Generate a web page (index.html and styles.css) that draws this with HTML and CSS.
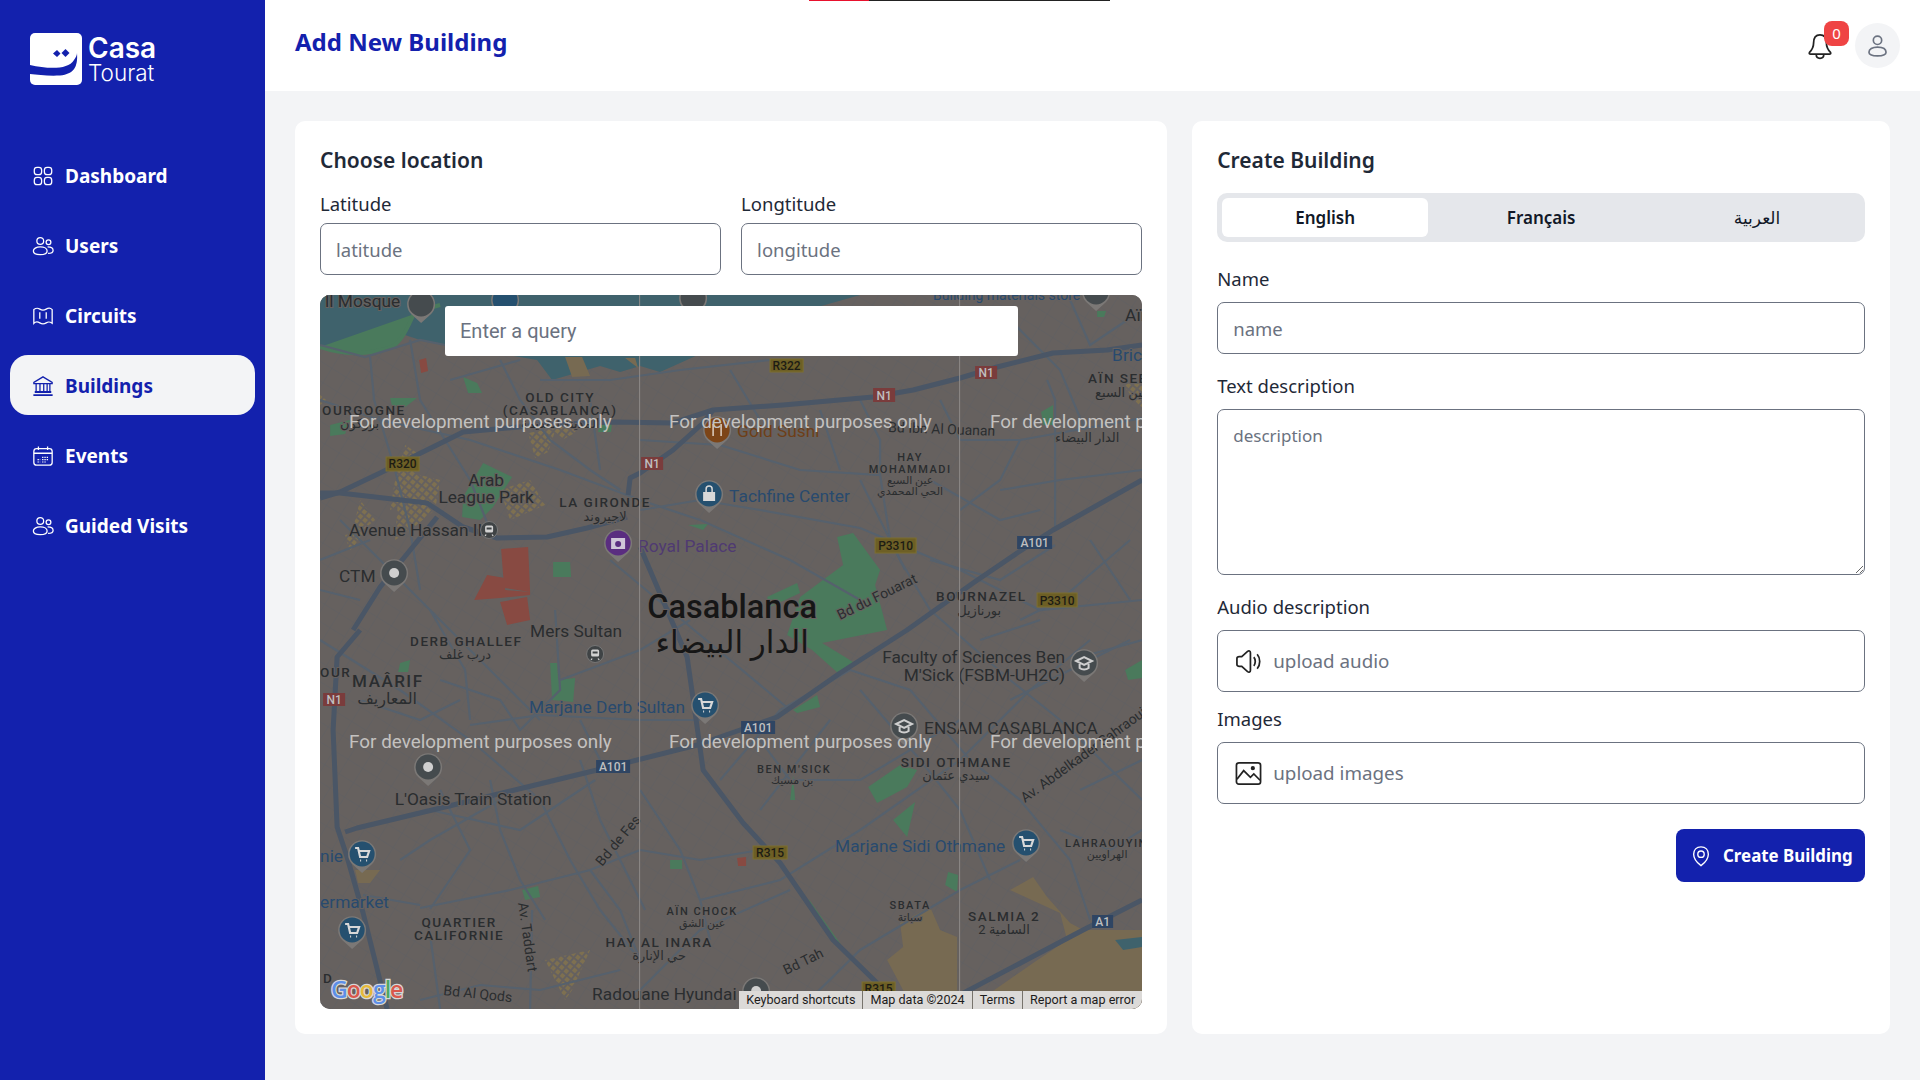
FILE: index.html
```html
<!DOCTYPE html>
<html lang="en">
<head>
    <meta charset="UTF-8">
    <meta name="viewport" content="width=device-width, initial-scale=1.0">
    <title>Add New Building</title>
    <link rel="stylesheet" href="styles.css">
</head>
<body>
    <div class="progress"><span class="progress-red"></span><span class="progress-dark"></span></div>

    <aside class="sidebar">
        <div class="logo">
            <svg class="logo-mark" viewBox="0 0 52 52">
                <rect width="52" height="52" rx="5" fill="#fff"/>
                <path d="M0 32 C18 36 38 37 44 27 C46 24 47 22 47 20 C48 34 44 41 30 42.500 C18 43 8 42 0 41 Z" fill="#1321ad"/>
                <path d="M27 24 L23 20.500 L27 17 L30.500 20.500 Z M35.500 24 L31.500 20 L35.500 16 L39.500 20 Z" fill="#1321ad"/>
            </svg>
            <div class="logo-text"><span class="logo-casa">Casa</span><span class="logo-tourat">Tourat</span></div>
        </div>
        <nav class="nav">
            <a class="nav-item">
                <svg class="icon" viewBox="0 0 24 24"><rect x="2.500" y="2.500" width="8" height="8" rx="3"/><rect x="13.500" y="2.500" width="8" height="8" rx="3"/><rect x="2.500" y="13.500" width="8" height="8" rx="3"/><rect x="13.500" y="13.500" width="8" height="8" rx="3"/></svg>
                Dashboard
            </a>
            <a class="nav-item">
                <svg class="icon" viewBox="0 0 24 24"><circle cx="9" cy="6.500" r="3.700"/><circle cx="18" cy="8" r="2.600"/><path d="M9 13 C4.500 13 1.500 15 1.500 17.500 C1.500 20 4.500 21.500 9 21.500 C13.500 21.500 16.500 20 16.500 17.500 C16.500 15 13.500 13 9 13 Z"/><path d="M17 13 C20.500 13 23 14.500 23 16.800 C23 19 20.500 20 17.500 20"/></svg>
                Users
            </a>
            <a class="nav-item">
                <svg class="icon" viewBox="0 0 24 24"><path d="M2 5 C5 3 6 3 8.500 4.500 C11 6 13 6 15.500 4.500 C18 3 20 3 22 5 V20 C19 18 18 18 15.500 19.500 C13 21 11 21 8.500 19.500 C6 18 4 18 2 20 Z"/><path d="M8.500 8 V15 M15.500 8 V15"/></svg>
                Circuits
            </a>
            <a class="nav-item active">
                <svg class="icon" viewBox="0 0 24 24"><path d="M12 2 L22 8 V9.500 H2 V8 Z"/><path d="M4.500 9.500 V18.500 M8.700 9.500 V18.500 M12.800 9.500 V18.500 M16.500 9.500 V18.500 M19.500 9.500 V18.500"/><path d="M3 18.500 H21 M1.500 22 H22.500" stroke-width="2"/></svg>
                Buildings
            </a>
            <a class="nav-item">
                <svg class="icon" viewBox="0 0 24 24"><rect x="2" y="4" width="20" height="18" rx="3"/><path d="M2 9 H22 M7 1.500 V5.500 M17 1.500 V5.500"/><path d="M6 16 H9 M6 18.500 H9 M11 13.500 H18 M11 16 H18 M11 18.500 H15" stroke-dasharray="1.500 1" stroke-width="1.200"/></svg>
                Events
            </a>
            <a class="nav-item">
                <svg class="icon" viewBox="0 0 24 24"><circle cx="9" cy="6.500" r="3.700"/><circle cx="18" cy="8" r="2.600"/><path d="M9 13 C4.500 13 1.500 15 1.500 17.500 C1.500 20 4.500 21.500 9 21.500 C13.500 21.500 16.500 20 16.500 17.500 C16.500 15 13.500 13 9 13 Z"/><path d="M17 13 C20.500 13 23 14.500 23 16.800 C23 19 20.500 20 17.500 20"/></svg>
                Guided Visits
            </a>
        </nav>
    </aside>

    <div class="page">
        <header class="topbar">
            <h1>Add New Building</h1>
            <div class="topbar-right">
                <div class="bell">
                    <svg class="bell-icon" viewBox="0 0 24 24"><path d="M12 2.500 C7.500 2.500 6.500 6 6.500 9.500 C6.500 13 5.500 15 3 17.500 C2.500 18.500 3 19 4 19 H20 C21 19 21.500 18.500 21 17.500 C18.500 15 17.500 13 17.500 9.500 C17.500 6 16.500 2.500 12 2.500 Z"/><path d="M8.800 19.500 C8.800 21.300 10.200 22.500 12 22.500 C13.800 22.500 15.200 21.300 15.200 19.500"/></svg>
                    <span class="badge">0</span>
                </div>
                <div class="avatar">
                    <svg class="avatar-icon" viewBox="0 0 24 24"><circle cx="12" cy="7" r="4"/><path d="M12 13.500 C7 13.500 3.800 15.500 3.800 18.500 C3.800 21 7 22 12 22 C17 22 20.200 21 20.200 18.500 C20.200 15.500 17 13.500 12 13.500 Z"/></svg>
                </div>
            </div>
        </header>

        <main class="content">
            <section class="card location-card">
                <h2>Choose location</h2>
                <div class="coords">
                    <div>
                        <label class="field-label">Latitude</label>
                        <input class="input" type="text" placeholder="latitude">
                    </div>
                    <div>
                        <label class="field-label">Longtitude</label>
                        <input class="input" type="text" placeholder="longitude">
                    </div>
                </div>

                <div class="map">
                    <svg class="map-svg" viewBox="320 295 822 714">
                        <defs>
                            <pattern id="blocks" width="17" height="17" patternUnits="userSpaceOnUse" patternTransform="rotate(32)">
                                <path d="M0 0 H17 M0 0 V17" class="block-line"/>
                            </pattern>
                            <pattern id="hatch" width="6" height="6" patternUnits="userSpaceOnUse" patternTransform="rotate(40)">
                                <rect width="4" height="4" fill="#7e7050"/>
                            </pattern>
                            <g id="pin">
                                <path d="M0 19 L-10 10 A14 14 0 1 1 10 10 Z" fill="#7b7876"/>
                                <circle r="12.500"/>
                            </g>
                            <g id="cart">
                                <use href="#pin" fill="#25506f"/>
                                <path d="M-7 -6 H-4 L-2 3 H5 L7 -3 H-3.500 M-2 6.500 H-1 M4 6.500 H5" fill="none" stroke="#d8d8d8" stroke-width="2.200"/>
                            </g>
                            <g id="cap">
                                <use href="#pin" fill="#454b4e"/>
                                <path d="M-8 -2 L0 -6 L8 -2 L0 2 Z M-4.500 1 V5 C-2 7 2 7 4.500 5 V1" fill="none" stroke="#cfcfcf" stroke-width="2"/>
                            </g>
                            <g id="station">
                                <circle r="8.500" fill="#3f4345" stroke="#777" stroke-width="1"/>
                                <rect x="-4" y="-4.500" width="8" height="7" rx="1.500" fill="#d2d2d2"/>
                                <path d="M-3 4.500 L-4 6 M3 4.500 L4 6" stroke="#d2d2d2" stroke-width="1.300"/>
                                <rect x="-2.500" y="-2.500" width="5" height="2" fill="#3f4345"/>
                            </g>
                        </defs>

                        <rect x="320" y="295" width="822" height="714" fill="#66615f"/>
                        <rect x="320" y="295" width="822" height="714" fill="url(#blocks)"/>

                        <!-- water and parks -->
                        <path class="water" d="M320 295 H860 L800 312 L720 345 L660 372 L640 366 L620 372 L600 366 L552 380 L537 360 L420 340 L405 335 L392 347 L360 353 L320 346 Z"/>
                        <path class="park" fill="none" stroke="#4a7a5c" stroke-width="4" d="M320 347 C340 354 365 356 392 347 C405 338 410 320 415 312 L440 305"/>
                        <path class="tan" d="M565 357 H582 L590 376 L572 377 Z M625 358 H635 L638 368 Z"/>
                        <path class="park" d="M463 377 L477 383 L482 393 L468 393 Z M483 463 L512 477 L493 507 L480 520 L462 517 L463 497 Z M553 562 H570 L571 577 H553 Z M330 425 L350 420 L345 434 L330 436 Z M390 398 L417 398 L405 407 L392 406 Z M600 420 L612 420 L611 432 L598 432 Z M1041 412 L1053 405 L1053 425 L1043 425 Z M1097 311 L1106 311 L1104 317 L1097 317 Z"/>
                        <path class="park" d="M800 597 L843 565 L837 537 L853 533 L880 570 L875 585 L887 630 L822 643 L853 662 L840 675 L812 650 L787 635 Z"/>
                        <path class="park" d="M767 597 L797 583 L800 593 L770 607 Z M550 663 L557 663 L558 680 L575 678 L573 702 L552 700 Z M522 890 L538 886 L540 897 L525 900 Z M400 663 L410 660 L408 672 L398 672 Z M793 710 L817 695 L820 707 L797 713 Z M868 787 L900 765 L917 770 L907 787 L877 803 Z M893 820 L915 802 L907 837 Z M793 775 L795 800 L790 800 Z M670 860 L682 860 L682 869 L670 869 Z M948 872 L958 875 L957 892 L945 885 Z M1125 670 L1142 660 L1142 678 L1128 680 Z M688 525 L708 524 L703 530 Z"/>
                        <path class="park" stroke="#4a7a5c" stroke-width="2" d="M808 900 L840 945"/>
                        <path class="tan" d="M900 923 L930 907 L940 930 L957 937 V1009 H913 L887 960 L903 947 Z M1010 890 L1033 877 L1047 897 L1070 923 L1083 930 H1142 V1009 H967 L1033 963 L1067 940 L1060 913 Z"/>
                        <path fill="url(#hatch)" d="M528 433 L556 428 L548 452 L535 458 Z M545 425 L580 430 L562 440 Z M405 445 L420 455 L408 500 L390 510 L395 480 Z M400 470 L440 480 L435 510 L410 530 L395 540 Z M500 490 L530 480 L545 505 L510 520 Z M360 500 L375 520 L350 540 Z M345 535 L365 530 L350 552 Z M320 395 L326 400 L320 405 Z M545 960 L590 950 L572 990 L565 1000 Z M1123 385 L1142 380 V410 Z"/>
                        <path class="tan" d="M355 870 L380 870 L370 883 L358 883 Z"/>
                        <path class="water" d="M1115 940 L1142 937 V947 L1123 950 Z"/>
                        <path class="red" d="M501 549 L528 547 L530 592 L505 588 L503 575 Z M487 575 L505 578 L505 590 L530 592 L530 595 L500 598 L474 600 Z M500 602 L527 597 L530 620 L507 625 Z M419 360 L426 358 L428 371 L421 373 Z M737 858 L746 857 L746 866 L738 866 Z"/>

                        <!-- small streets -->
                        <g class="road-minor">
                            <path d="M320 345 L365 357 L420 340 L445 345 M370 357 L374 400 L395 470 L410 530 L420 590 M410 340 L420 400 L445 440 L470 480 L490 530"/>
                            <path d="M320 400 L380 420 L470 440 L560 470 L640 500 L700 520 L790 560 L860 600"/>
                            <path d="M500 360 L520 400 L550 440 L590 470 L620 490 M540 380 L610 380 L680 370 L770 360"/>
                            <path d="M640 440 L720 445 L800 470 L880 475 L880 440 L860 400 M880 475 L890 540 L905 570"/>
                            <path d="M960 440 L1020 440 L1142 418 M1047 380 L1055 400 L1055 530 M960 510 L1000 480 L1020 440"/>
                            <path d="M860 480 L900 560 L930 610 L1010 680 L1060 720 L1142 800 M930 560 L1000 580 L1055 545"/>
                            <path d="M640 510 L700 500 L760 510 L860 528 L960 570 L1040 610 L1142 600"/>
                            <path d="M1000 310 L1060 370 L1085 430 M1070 300 L1090 345 L1142 310"/>
                            <path d="M340 520 L420 600 L500 680 L540 720 M320 590 L360 600 M555 610 L560 690 L520 730 L500 700 L440 680"/>
                            <path d="M320 640 L400 690 L470 740 L540 800 L570 860 L600 910 L640 960 M430 610 L465 670 L470 720"/>
                            <path d="M470 725 L540 715 L640 720 L700 720 M560 680 L640 650 L690 620 M610 560 L670 610 L790 710"/>
                            <path d="M430 810 L520 830 L595 780 M440 790 L470 850 L430 909 M490 780 L500 830 L520 880 L545 920"/>
                            <path d="M420 908 L510 890 L590 870 L640 850 M590 870 L620 910 L640 960 M580 760 L600 820 L630 880 L645 910"/>
                            <path d="M640 790 L680 850 L700 900 L710 940 M640 850 L700 860 L760 850 M830 720 L760 810 M640 990 L700 930 L790 890"/>
                            <path d="M700 900 L780 880 L860 830 L960 760 L1030 690 L1090 640 M780 780 L860 780 L960 720 M860 690 L920 760 L960 810 L990 880"/>
                            <path d="M720 780 L780 710 L850 670 L910 690 L970 760 L1020 800 L1070 860 L1090 920"/>
                            <path d="M800 1009 L860 950 L960 890 L1020 860 M1130 540 L1060 600 L1020 620 M1070 660 L1142 640"/>
                            <path d="M1010 700 L1130 640 M1080 790 L1142 760 M1060 830 L1110 850 L1142 830 M420 1000 L480 985 L540 990 L620 970"/>
                            <path d="M363 895 L420 905 M400 860 L430 840 L500 800 M428 920 L440 1009 M532 910 L530 1009 M640 990 L600 1000"/>
                            <path d="M320 560 L370 540 M450 380 L520 360 M590 400 L600 470 M730 370 L760 420 M820 410 L840 470 M940 400 L960 440 M1000 490 L1060 480 L1142 470"/>
                            <path d="M930 480 L1000 520 L1040 510 M1090 540 L1130 600 M980 640 L1040 620 M360 700 L420 720 L460 700 M580 720 L600 760 M760 740 L790 780"/>
                        </g>

                        <!-- highways -->
                        <g class="road-main">
                            <path d="M1142 345 L1107 350 L1053 353 L997 367 L960 378 L913 390 L873 397 L783 405 L713 410 L673 423 L613 422 L540 425 L463 432 L447 440 L380 473 L340 492 L320 498"/>
                            <path d="M713 410 L703 423 L673 450 L640 473 L630 478 L628 495"/>
                            <path d="M320 493 L340 493 L427 503 L463 527 L497 538 L547 537 L587 528 L627 517"/>
                            <path d="M640 547 L667 610 L687 657 L697 727 L703 770 L743 823 L780 863 L833 940 L877 983 L900 1009"/>
                            <path d="M353 630 L380 587 L437 517"/>
                            <path d="M360 630 L337 657 L333 730 L337 827 L347 857 L363 913 L387 1009"/>
                            <path d="M345 832 L357 828 L453 805 L597 770 L697 745 L740 730 L777 717 L840 673 L907 630 L973 583 L1017 553 L1053 530 L1142 480"/>
                            <path d="M933 1009 L1083 930 L1142 900"/>
                        </g>

                        <!-- shields -->
                        <g class="shield-yellow">
                            <rect x="386" y="457" width="33" height="14"/><text x="402.500" y="468">R320</text>
                            <rect x="770" y="359" width="33" height="13"/><text x="786.500" y="370">R322</text>
                            <rect x="875" y="538" width="41" height="15"/><text x="895.500" y="550">P3310</text>
                            <rect x="1037" y="593" width="40" height="14"/><text x="1057" y="605">P3310</text>
                            <rect x="753" y="846" width="34" height="13"/><text x="770" y="857">R315</text>
                            <rect x="862" y="982" width="33" height="13"/><text x="878.500" y="993">R315</text>
                        </g>
                        <g class="shield-red">
                            <rect x="641" y="457" width="22" height="13"/><text x="652" y="468">N1</text>
                            <rect x="873" y="388" width="22" height="14"/><text x="884" y="400">N1</text>
                            <rect x="975" y="366" width="22" height="13"/><text x="986" y="377">N1</text>
                            <rect x="323" y="693" width="22" height="13"/><text x="334" y="704">N1</text>
                        </g>
                        <g class="shield-blue">
                            <rect x="1017" y="536" width="35" height="13"/><text x="1034.500" y="547">A101</text>
                            <rect x="741" y="721" width="34" height="13"/><text x="758" y="732">A101</text>
                            <rect x="596" y="760" width="34" height="13"/><text x="613" y="771">A101</text>
                            <rect x="1092" y="915" width="21" height="13"/><text x="1102.500" y="926">A1</text>
                        </g>

                        <!-- labels -->
                        <g class="map-labels">
                            <text class="poi" x="325" y="307">ll Mosque</text>
                            <text class="poi blue small" x="933" y="300">Building materials store</text>
                            <text class="poi" x="1125" y="321">Aïn</text>
                            <text class="poi blue" x="1112" y="361">Bric</text>
                            <text class="area" x="322" y="415">OURGOGNE</text>
                            <text class="area mid" x="560" y="402">OLD CITY</text>
                            <text class="area mid" x="560" y="415">(CASABLANCA)</text>
                            <text class="ar" x="340" y="428">بوركون</text>
                            <text class="ar mid" x="560" y="428">المدينة القديمة</text>
                            <text class="area" x="1088" y="383">AÏN SEE</text>
                            <text class="ar" x="1095" y="397">عين السبع</text>
                            <text class="road-name" transform="translate(888 432) rotate(2)">Bd Ibn Al Ouanan</text>
                            <text class="ar" x="1055" y="442">الدار البيضاء</text>
                            <text class="area small mid" x="910" y="461">HAY</text>
                            <text class="area small mid" x="910" y="473">MOHAMMADI</text>
                            <text class="ar small mid" x="910" y="484">عين السبع</text>
                            <text class="ar small mid" x="910" y="495">الحي المحمدي</text>
                            <text class="poi mid" x="486" y="486">Arab</text>
                            <text class="poi mid" x="486" y="503">League Park</text>
                            <text class="area mid" x="605" y="507">LA GIRONDE</text>
                            <text class="ar mid" x="605" y="521">لاجيروند</text>
                            <text class="poi" x="349" y="536">Avenue Hassan II</text>
                            <text class="poi" x="339" y="582">CTM</text>
                            <text class="poi purple" x="638" y="552">Royal Palace</text>
                            <text class="poi brown" x="737" y="437">Gold Sushi</text>
                            <text class="poi blue" x="729" y="502">Tachfine Center</text>
                            <text class="city mid" x="732" y="618">Casablanca</text>
                            <text class="city-ar mid" x="732" y="653">الدار البيضاء</text>
                            <text class="road-name" transform="translate(840 620) rotate(-26)">Bd du Fouarat</text>
                            <text class="area" x="936" y="601">BOURNAZEL</text>
                            <text class="ar mid" x="979" y="615">بورنازيل</text>
                            <text class="poi mid" x="576" y="637">Mers Sultan</text>
                            <text class="area" x="410" y="646">DERB GHALLEF</text>
                            <text class="ar mid" x="465" y="659">درب غلف</text>
                            <text class="area" x="320" y="677">OUR</text>
                            <text class="area big" x="352" y="687">MAÂRIF</text>
                            <text class="ar big-ar mid" x="387" y="704">المعاريف</text>
                            <text class="poi blue" x="529" y="713">Marjane Derb Sultan</text>
                            <text class="poi end" x="1065" y="663">Faculty of Sciences Ben</text>
                            <text class="poi end" x="1065" y="681">M'Sick (FSBM-UH2C)</text>
                            <text class="poi" x="924" y="734">ENSAM CASABLANCA</text>
                            <text class="area small" x="757" y="773">BEN M'SICK</text>
                            <text class="ar small mid" x="792" y="784">بن مسيك</text>
                            <text class="area mid" x="956" y="767">SIDI OTHMANE</text>
                            <text class="ar mid" x="956" y="780">سيدي عثمان</text>
                            <text class="road-name" transform="translate(1025 803) rotate(-36)">Av. Abdelkader Sahraoui</text>
                            <text class="poi mid" x="473" y="805">L'Oasis Train Station</text>
                            <text class="poi blue" x="835" y="852">Marjane Sidi Othmane</text>
                            <text class="area small" x="1065" y="847">LAHRAOUYIN</text>
                            <text class="ar small mid" x="1107" y="858">الهراويين</text>
                            <text class="poi blue" x="320" y="862">nie</text>
                            <text class="road-name" transform="translate(602 867) rotate(-50)">Bd de Fes</text>
                            <text class="poi blue" x="320" y="908">ermarket</text>
                            <text class="area small mid" x="910" y="909">SBATA</text>
                            <text class="ar small mid" x="910" y="921">سباتة</text>
                            <text class="area mid" x="1004" y="921">SALMIA 2</text>
                            <text class="ar mid" x="1004" y="934">السامية 2</text>
                            <text class="area mid" x="459" y="927">QUARTIER</text>
                            <text class="area mid" x="459" y="940">CALIFORNIE</text>
                            <text class="road-name" transform="translate(518 903) rotate(82)">Av. Taddart</text>
                            <text class="area small mid" x="702" y="915">AÏN CHOCK</text>
                            <text class="ar small mid" x="702" y="927">عين الشق</text>
                            <text class="area mid" x="659" y="947">HAY AL INARA</text>
                            <text class="ar mid" x="659" y="960">حي الإنارة</text>
                            <text class="road-name" transform="translate(786 975) rotate(-26)">Bd Tah</text>
                            <text class="road-name" transform="translate(443 995) rotate(6)">Bd Al Qods</text>
                            <text class="poi" x="592" y="1000">Radouane Hyundai</text>
                            <text class="area" x="323" y="983">D</text>
                        </g>

                        <!-- places -->
                        <use href="#pin" transform="translate(394 573)" fill="#454b4e"/>
                        <circle cx="394" cy="573" r="5" fill="#cfcfcf"/>
                        <use href="#pin" transform="translate(428 767)" fill="#454b4e"/>
                        <circle cx="428" cy="767" r="5" fill="#cfcfcf"/>
                        <use href="#pin" transform="translate(756 991)" fill="#454b4e"/>
                        <circle cx="756" cy="991" r="5" fill="#cfcfcf"/>
                        <use href="#pin" transform="translate(421 304)" fill="#454b4e"/>
                        <use href="#pin" transform="translate(693 298)" fill="#454b4e"/>
                        <use href="#pin" transform="translate(505 300)" fill="#25506f"/>
                        <use href="#pin" transform="translate(1096 292)" fill="#454b4e"/>
                        <use href="#station" transform="translate(489 530)"/>
                        <use href="#station" transform="translate(595 654)"/>
                        <use href="#pin" transform="translate(618 543)" fill="#5a2d80"/>
                        <path d="M611 538 H625 V549 H611 Z" fill="#cfc6d8"/><circle cx="618" cy="544" r="3" fill="#5a2d80"/>
                        <use href="#pin" transform="translate(717 430)" fill="#7d4517"/>
                        <path d="M713 424 V436 M721 424 V436" stroke="#d8c8b8" stroke-width="1.600"/>
                        <use href="#pin" transform="translate(709 494)" fill="#25506f"/>
                        <path d="M703 492 H715 V501 H703 Z" fill="#d8d8d8"/><path d="M706 492 V489 C706 485 712 485 712 489 V492" fill="none" stroke="#d8d8d8" stroke-width="1.500"/>
                        <use href="#cart" transform="translate(705 705)"/>
                        <use href="#cart" transform="translate(362 854)"/>
                        <use href="#cart" transform="translate(352 930)"/>
                        <use href="#cart" transform="translate(1026 843)"/>
                        <use href="#cap" transform="translate(1084 663)"/>
                        <use href="#cap" transform="translate(904 726)"/>

                        <!-- grid of the unlicensed map -->
                        <path d="M639.500 295 V1009 M959.500 295 V1009" stroke="#8e8b88" stroke-width="1"/>
                        <g class="watermark">
                            <text x="349" y="428">For development purposes only</text>
                            <text x="669" y="428">For development purposes only</text>
                            <text x="990" y="428">For development purposes only</text>
                            <text x="349" y="748">For development purposes only</text>
                            <text x="669" y="748">For development purposes only</text>
                            <text x="990" y="748">For development purposes only</text>
                        </g>

                        <text class="google" x="331" y="998"><tspan fill="#5c8fe8">G</tspan><tspan fill="#d9584c">o</tspan><tspan fill="#e6b93a">o</tspan><tspan fill="#5c8fe8">g</tspan><tspan fill="#4ea863">l</tspan><tspan fill="#d9584c">e</tspan></text>
                    </svg>

                    <div class="map-search">Enter a query</div>
                    <div class="map-credits">
                        <span>Keyboard shortcuts</span>
                        <span>Map data ©2024</span>
                        <span>Terms</span>
                        <span>Report a map error</span>
                    </div>
                </div>
            </section>

            <section class="card create-card">
                <h2>Create Building</h2>
                <div class="tabs">
                    <div class="tab active">English</div>
                    <div class="tab">Français</div>
                    <div class="tab tab-ar">العربية</div>
                </div>

                <label class="field-label name-label">Name</label>
                <input class="input" type="text" placeholder="name">

                <label class="field-label desc-label">Text description</label>
                <textarea class="input textarea" placeholder="description"></textarea>

                <label class="field-label desc-label">Audio description</label>
                <div class="upload">
                    <svg class="upload-icon" viewBox="0 0 28 28"><path d="M2 11 C2 9.500 3 9 4.500 9 H7 L13 3.500 C14.500 2.500 16 3 16 5 V23 C16 25 14.500 25.500 13 24.500 L7 19 H4.500 C3 19 2 18.500 2 17 Z"/><path d="M19.500 9.500 C21.500 12 21.500 16 19.500 18.500 M23 6.500 C26.500 10.500 26.500 17.500 23 21.500"/></svg>
                    <span>upload audio</span>
                </div>

                <label class="field-label images-label">Images</label>
                <div class="upload">
                    <svg class="upload-icon" viewBox="0 0 28 28"><rect x="1.500" y="3" width="25" height="22" rx="2.500"/><path d="M2 20 L9 11 L16 18 L19.500 14.500 L26 21"/><circle cx="18.500" cy="8.500" r="1.300" fill="#222"/></svg>
                    <span>upload images</span>
                </div>

                <div class="actions">
                    <button class="btn" type="button">
                        <svg class="btn-icon" viewBox="0 0 24 24"><path d="M12 2 C7 2 4 5.500 4 10 C4 15 8 19.500 12 22.500 C16 19.500 20 15 20 10 C20 5.500 17 2 12 2 Z"/><circle cx="12" cy="10" r="3.500"/></svg>
                        Create Building
                    </button>
                </div>
            </section>
        </main>
    </div>
</body>
</html>
```

FILE: styles.css
```css
* {
    box-sizing: border-box;
}

body {
    font-family: "Noto Sans", "DejaVu Sans", sans-serif;
    margin: 0;
    height: 1080px;
    overflow: hidden;
    display: flex;
    background-color: #f3f4f6;
    color: #1f2937;
}

.progress {
    position: fixed;
    top: 0;
    left: 809px;
    width: 301px;
    height: 1px;
    display: flex;
    z-index: 10;
}

.progress-red {
    width: 60px;
    background-color: #e8112d;
}

.progress-dark {
    flex: 1;
    background-color: #222;
}

/* sidebar */
.sidebar {
    width: 265px;
    flex-shrink: 0;
    padding: 33px 10px 0;
    background-color: #1321ad;
}

.logo {
    display: flex;
    align-items: center;
    gap: 6px;
    height: 52px;
    padding-left: 20px;
}

.logo-mark {
    width: 52px;
    height: 52px;
}

.logo-text {
    display: flex;
    flex-direction: column;
    margin-top: -1px;
    color: #fff;
    font-family: "Inter", sans-serif;
}

.logo-casa {
    font-size: 28px;
    font-weight: 600;
    line-height: 27px;
}

.logo-tourat {
    font-size: 22.500px;
    font-weight: 300;
    line-height: 21px;
}

.nav {
    margin-top: 60px;
    display: flex;
    flex-direction: column;
    gap: 10px;
}

.nav-item {
    display: flex;
    align-items: center;
    gap: 11px;
    height: 60px;
    padding-left: 22px;
    padding-top: 2px;
    border-radius: 18px;
    color: #fff;
    font-size: 19px;
    font-weight: 700;
}

.nav-item.active {
    background-color: #f3f4f6;
    color: #1321ad;
}

.icon {
    width: 22px;
    height: 22px;
    fill: none;
    stroke: currentColor;
    stroke-width: 1.400;
}

/* header */
.page {
    flex: 1;
    display: flex;
    flex-direction: column;
    min-width: 0;
}

.topbar {
    height: 91px;
    flex-shrink: 0;
    display: flex;
    align-items: flex-start;
    justify-content: space-between;
    padding: 0 20px 0 30px;
    background-color: #fff;
}

.topbar h1 {
    margin: 24px 0 0;
    font-size: 24px;
    line-height: 36px;
    font-weight: 700;
    color: #1321ad;
}

.topbar-right {
    display: flex;
    align-items: center;
    gap: 21px;
    margin-top: 23px;
}

.bell {
    position: relative;
    width: 28px;
    height: 28px;
}

.bell-icon {
    width: 28px;
    height: 28px;
    fill: none;
    stroke: #222;
    stroke-width: 1.500;
}

.badge {
    position: absolute;
    top: -11px;
    left: 18px;
    width: 25px;
    height: 25px;
    border-radius: 8px;
    background-color: #ef4444;
    color: #fff;
    font-size: 15px;
    line-height: 25px;
    text-align: center;
}

.avatar {
    width: 45px;
    height: 45px;
    border-radius: 50%;
    display: flex;
    align-items: center;
    justify-content: center;
    background-color: #f3f4f6;
}

.avatar-icon {
    width: 25px;
    height: 25px;
    fill: none;
    stroke: #6b7280;
    stroke-width: 1.600;
}

/* cards */
.content {
    flex: 1;
    display: grid;
    grid-template-columns: 5fr 4fr;
    gap: 25px;
    padding: 30px 30px 46px;
    min-height: 0;
}

.card {
    display: flex;
    flex-direction: column;
    padding: 25px;
    border-radius: 10px;
    background-color: #fff;
    min-height: 0;
}

.card h2 {
    margin: -1px 0 15px;
    font-size: 21px;
    line-height: 30px;
    font-weight: 600;
    color: #1f2937;
}

.field-label {
    display: block;
    font-size: 18.500px;
    line-height: 27px;
    color: #1f2937;
}

.input {
    display: block;
    width: 100%;
    height: 52px;
    padding: 0 15px;
    border: 1px solid #6b7280;
    border-radius: 7px;
    background-color: #fff;
    font-family: inherit;
    font-size: 18.500px;
    color: #1f2937;
    outline: none;
}

.input::placeholder {
    color: #6b7280;
    opacity: 1;
}

.coords {
    display: grid;
    grid-template-columns: 1fr 1fr;
    gap: 20px;
    margin-bottom: 20px;
}

.coords .field-label {
    margin-bottom: 6px;
}

/* map */
.map {
    position: relative;
    flex: 1;
    min-height: 0;
    overflow: hidden;
    border-radius: 10px;
    background-color: #66615f;
}

.map-svg {
    display: block;
    width: 100%;
    height: 100%;
    font-family: Roboto, "DejaVu Sans", sans-serif;
}

.block-line {
    fill: none;
    stroke: #5c5f63;
    stroke-width: 0.800;
}

.water {
    fill: #3f626c;
}

.park {
    fill: #4a7a5c;
}

.tan {
    fill: #776a52;
}

.red {
    fill: #884a42;
}

.road-minor path {
    fill: none;
    stroke: #56616d;
    stroke-width: 2.200;
}

.road-main path {
    fill: none;
    stroke: #4a5666;
    stroke-width: 5;
    stroke-linejoin: round;
}

.shield-yellow rect {
    fill: #6d5f25;
    stroke: #7d6f30;
}

.shield-red rect {
    fill: #7a3c3c;
}

.shield-blue rect {
    fill: #2f4563;
}

.shield-yellow text,
.shield-red text,
.shield-blue text {
    font-size: 12px;
    font-weight: 500;
    text-anchor: middle;
}

.shield-yellow text {
    fill: #1d1c14;
}

.shield-red text,
.shield-blue text {
    fill: #bfbfbf;
}

.map-labels text {
    paint-order: stroke;
    stroke: #66615f;
    stroke-width: 2px;
    fill: #2a2d2f;
}

.map-labels .mid {
    text-anchor: middle;
}

.map-labels .end {
    text-anchor: end;
}

.poi {
    font-size: 17.300px;
}

.poi.small {
    font-size: 14px;
}

.map-labels .poi.blue {
    fill: #284a6e;
}

.map-labels .poi.purple {
    fill: #4f3a72;
}

.map-labels .poi.brown {
    fill: #6e3f18;
}

.area {
    font-size: 13.500px;
    font-weight: 500;
    letter-spacing: 1.500px;
}

.area.small {
    font-size: 11px;
}

.area.big {
    font-size: 17px;
}

.ar {
    font-size: 13px;
}

.ar.small {
    font-size: 11px;
}

.ar.big-ar {
    font-size: 16px;
}

.road-name {
    font-size: 14px;
}

.city {
    font-size: 32.500px;
    font-weight: 500;
}

.city-ar {
    font-size: 31px;
}

.map-labels .city,
.map-labels .city-ar {
    fill: #161616;
}

.watermark text {
    font-size: 18.850px;
    fill: #c4c2c0;
}

.google {
    font-family: "Open Sans", sans-serif;
    font-size: 23px;
    font-weight: 600;
    letter-spacing: -1px;
    paint-order: stroke;
    stroke: #d8d8d8;
    stroke-width: 2.500px;
}

.map-search {
    position: absolute;
    top: 11px;
    left: 125px;
    width: 573px;
    height: 50px;
    padding-left: 15px;
    border-radius: 3px;
    background-color: #fff;
    font-family: Roboto, sans-serif;
    font-size: 20px;
    line-height: 50px;
    color: #6b7280;
}

.map-credits {
    position: absolute;
    right: 0;
    bottom: 0;
    display: flex;
    height: 18px;
    background-color: #dcdad8;
    font-family: Roboto, sans-serif;
    font-size: 12.600px;
    line-height: 18px;
    color: #1c1c1c;
}

.map-credits span {
    padding: 0 7px;
    border-left: 1px solid #77736c;
}

.map-credits span:first-child {
    border-left: none;
}

/* create form */
.tabs {
    display: grid;
    grid-template-columns: repeat(3, 1fr);
    gap: 10px;
    height: 49px;
    margin-top: 3px;
    padding: 5px;
    border-radius: 10px;
    background-color: #e5e7eb;
}

.tab {
    border-radius: 6px;
    font-size: 17px;
    font-weight: 600;
    line-height: 39px;
    text-align: center;
    color: #111827;
}

.tab.active {
    background-color: #fff;
}

.tab-ar {
    font-weight: 400;
}

.name-label {
    margin-top: 23px;
    margin-bottom: 10px;
}

.desc-label {
    margin-top: 18px;
    margin-bottom: 10px;
}

.textarea {
    height: 166px;
    padding-top: 14px;
    font-size: 17px;
    resize: vertical;
}

.images-label {
    margin-top: 13px;
    margin-bottom: 10px;
}

.upload {
    display: flex;
    align-items: center;
    gap: 11px;
    height: 62px;
    padding-left: 17px;
    border: 1px solid #6b7280;
    border-radius: 7px;
    font-size: 18.800px;
    color: #6b7280;
}

.upload-icon {
    width: 27px;
    height: 27px;
    fill: none;
    stroke: #222;
    stroke-width: 1.800;
}

.actions {
    display: flex;
    justify-content: flex-end;
    margin-top: 25px;
}

.btn {
    display: flex;
    align-items: center;
    gap: 11px;
    height: 53px;
    width: 189px;
    padding: 0 0 0 14px;
    border: none;
    border-radius: 8px;
    background-color: #1321ad;
    color: #fff;
    font-family: inherit;
    font-size: 16.900px;
    font-weight: 700;
}

.btn-icon {
    width: 22px;
    height: 22px;
    fill: none;
    stroke: #fff;
    stroke-width: 1.500;
}
```
